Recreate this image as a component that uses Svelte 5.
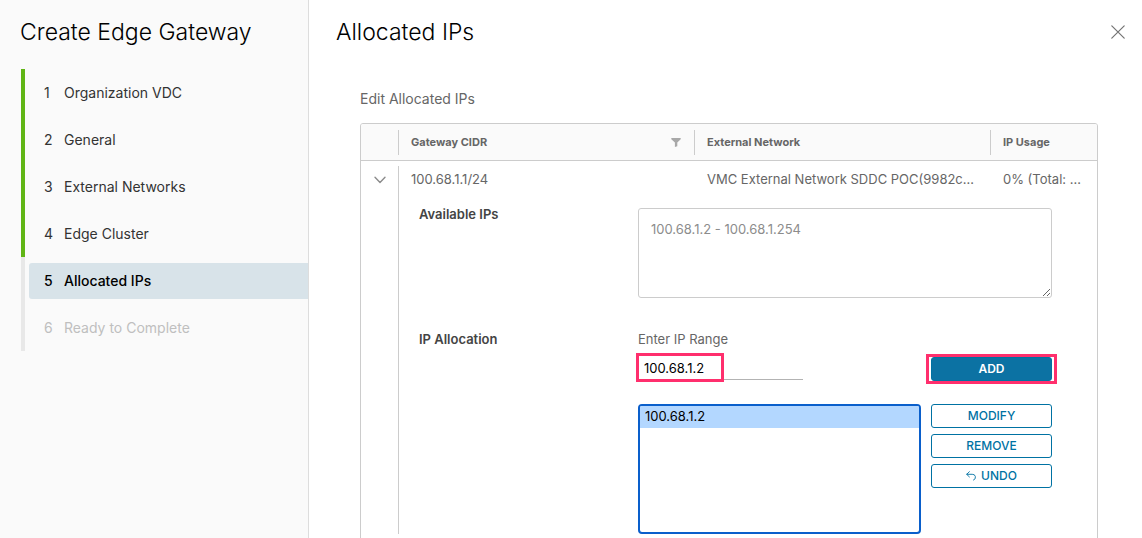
<script>
  const steps = ['Organization VDC', 'General', 'External Networks', 'Edge Cluster', 'Allocated IPs', 'Ready to Complete'];
  const current = 4;
  let available = $state('100.68.1.2 - 100.68.1.254');
  let range = $state('100.68.1.2');
  let selected = $state('100.68.1.2');
</script>

<div class="wizard">
  <aside>
    <h1>Create Edge Gateway</h1>
    <ol>
      {#each steps as step, i}
        <li class:done={i < current}>
          <button class="step" class:active={i === current} disabled={i > current}>
            <span class="num">{i + 1}</span><span>{step}</span>
          </button>
        </li>
      {/each}
    </ol>
  </aside>

  <main>
    <header>
      <h2>Allocated IPs</h2>
      <button class="close" aria-label="Close">
        <svg width="16" height="16" viewBox="0 0 16 16" fill="none" stroke="#737373" stroke-width="1.2" stroke-linecap="round"><path d="M1.8 1.8l12.4 12.4M14.2 1.8L1.8 14.2" /></svg>
      </button>
    </header>

    <section>
      <p class="intro">Edit Allocated IPs</p>
      <div class="frame">
        <table>
          <colgroup><col class="c-toggle" /><col /><col /><col class="c-usage" /></colgroup>
          <thead>
            <tr>
              <th class="rule"></th>
              <th class="rule">
                <div class="head">
                  <span>Gateway CIDR</span>
                  <button class="filter" aria-label="Filter">
                    <svg width="10" height="9" viewBox="0 0 10 9" fill="#a8a8a8"><path d="M.3 0h9.4v1.2L6.3 4.4v3.9l-2.4.7V4.4L.3 1.2z" /></svg>
                  </button>
                </div>
              </th>
              <th class="rule">External Network</th>
              <th>IP Usage</th>
            </tr>
          </thead>
          <tbody>
            <tr>
              <td class="toggle" rowspan="2">
                <button aria-label="Collapse row">
                  <svg width="12" height="8" viewBox="0 0 12 8" fill="none" stroke="#8c8c8c" stroke-width="1.4" stroke-linecap="round" stroke-linejoin="round"><path d="M1 1.2l5 5.2 5-5.2" /></svg>
                </button>
              </td>
              <td>100.68.1.1/24</td>
              <td>VMC External Network SDDC POC(9982c…</td>
              <td>0% (Total: …</td>
            </tr>
            <tr>
              <td class="detail" colspan="3">
                <div class="form">
                  <label class="name" for="available">Available IPs</label>
                  <textarea id="available" readonly bind:value={available}></textarea>

                  <span class="name" id="allocation">IP Allocation</span>
                  <div class="allocation" role="group" aria-labelledby="allocation">
                    <label for="range">Enter IP Range</label>
                    <div class="entry">
                      <div class="field">
                        <input id="range" type="text" bind:value={range} />
                        <span class="mark mark-field"></span>
                      </div>
                      <div class="action">
                        <button class="btn primary">Add</button>
                        <span class="mark mark-action"></span>
                      </div>
                    </div>
                    <div class="ranges">
                      <select size="5" aria-label="Allocated ranges" bind:value={selected}>
                        <option value="100.68.1.2">100.68.1.2</option>
                      </select>
                      <div class="actions">
                        <button class="btn">Modify</button>
                        <button class="btn">Remove</button>
                        <button class="btn">
                          <svg width="10" height="10" viewBox="0 0 10 10" fill="none" stroke="currentColor" stroke-width="0.9" stroke-linecap="round" stroke-linejoin="round"><path d="M3.4.7L.7 3.3l2.7 2.6M.8 3.3h5.4a3 3 0 0 1 1.3 5.8" /></svg>
                          Undo
                        </button>
                      </div>
                    </div>
                  </div>
                </div>
              </td>
            </tr>
          </tbody>
        </table>
      </div>
    </section>
  </main>
</div>

<style>
  :global(body) { margin: 0; background: #fff; }
  .wizard { display: flex; height: 100vh; overflow: hidden; font: 13px/24px Inter, "Open Sans", sans-serif; color: #666; }
  .wizard * { box-sizing: border-box; }
  button, input, select, textarea { font: inherit; color: inherit; }
  button { background: none; border: 0; padding: 0; }
  h1, h2 { margin: 0; font-size: 23px; line-height: 32px; font-weight: 300; color: #000; }

  aside { flex: 0 0 309px; background: #fafafa; border-right: 1px solid #ddd; padding: 16px 0 0 20px; }
  ol { list-style: none; margin: 21px 0 0 1px; padding: 0; }
  li { border-left: 4px solid #e8e8e8; padding: 6px 0 5px 4px; }
  li.done { border-color: #60b515; }
  .step { display: flex; width: 100%; height: 36px; align-items: center; padding-left: 15px; border-radius: 3px 0 0 3px; font-size: 14px; color: #333; }
  .step.active { background: #d8e3e9; color: #000; font-weight: 500; }
  .step:disabled { color: #bfbfbf; }
  .num { width: 20px; text-align: left; }

  main { flex: 1; min-width: 0; padding: 16px 16px 0 27px; }
  header { display: flex; justify-content: space-between; align-items: center; }
  .close { display: flex; }
  section { padding: 39px 28px 0 24px; }
  .intro { margin: 0 0 12px; font-size: 14px; }
  .frame { border: 1px solid #ccc; border-radius: 3px; overflow: hidden; }
  table { width: 100%; table-layout: fixed; border-collapse: separate; border-spacing: 0; }
  .c-toggle { width: 38px; }
  .c-usage { width: 106px; }
  th { height: 37px; padding: 0 12px; text-align: left; font-size: 11px; font-weight: 700; background-color: #fafafa; border-bottom: 1px solid #ccc; }
  .rule { background-image: linear-gradient(#ccc, #ccc); background-repeat: no-repeat; background-size: 1px 25px; background-position: right 6px; }
  .head { display: flex; justify-content: space-between; align-items: center; }
  .filter { display: flex; margin-right: 2px; }
  td { height: 36px; padding: 0 12px; vertical-align: middle; white-space: nowrap; overflow: hidden; text-overflow: ellipsis; }
  .toggle { padding: 15px 0 0 13px; vertical-align: top; background: linear-gradient(#ccc, #ccc) no-repeat right 5px / 1px calc(100% - 11px); }
  .toggle button { display: flex; }

  .detail { padding: 11px 45px 6px 20px; vertical-align: top; white-space: normal; overflow: visible; }
  .form { display: grid; grid-template-columns: 219px 1fr; row-gap: 29px; }
  .name { font-weight: 600; color: #444; line-height: 12px; }
  textarea { display: block; width: 100%; height: 90px; padding: 8px 12px; border: 1px solid #ccc; border-radius: 3px; color: #8c8c8c; background: #fff; outline: 0; }
  .allocation { display: flex; flex-direction: column; }
  .allocation > label, #allocation { line-height: 24px; }
  .entry { display: flex; justify-content: space-between; margin-top: 6px; }
  .field, .action { position: relative; }
  .field { width: 165px; }
  input { display: block; width: 100%; height: 23px; padding: 0 6px; border: 0; border-bottom: 1px solid #b3b3b3; color: #000; background: none; outline: 0; }
  .btn { display: flex; align-items: center; justify-content: center; gap: 5px; width: 121px; height: 24px; border: 1px solid #0072a3; border-radius: 3px; color: #0072a3; font-size: 12px; font-weight: 500; text-transform: uppercase; }
  .primary { background: #0c72a3; color: #fff; font-weight: 600; }
  .mark { position: absolute; border: 3px solid #ff2f6d; pointer-events: none; }
  .mark-field { top: -4px; left: -2px; width: 88px; height: 29px; }
  .mark-action { inset: -3px -5px; }
  .ranges { display: flex; gap: 10px; margin-top: 23px; }
  select { flex: 1; min-width: 0; height: 130px; padding: 0; border: 2px solid #0a5fcb; border-radius: 4px; background: #fff; color: #000; outline: 0; overflow: hidden; }
  option { height: 22px; padding: 2px 5px 0; line-height: 22px; }
  option:checked { background: #b3d7ff linear-gradient(#b3d7ff, #b3d7ff); color: #000; }
  .actions { display: flex; flex-direction: column; gap: 6px; }
</style>
